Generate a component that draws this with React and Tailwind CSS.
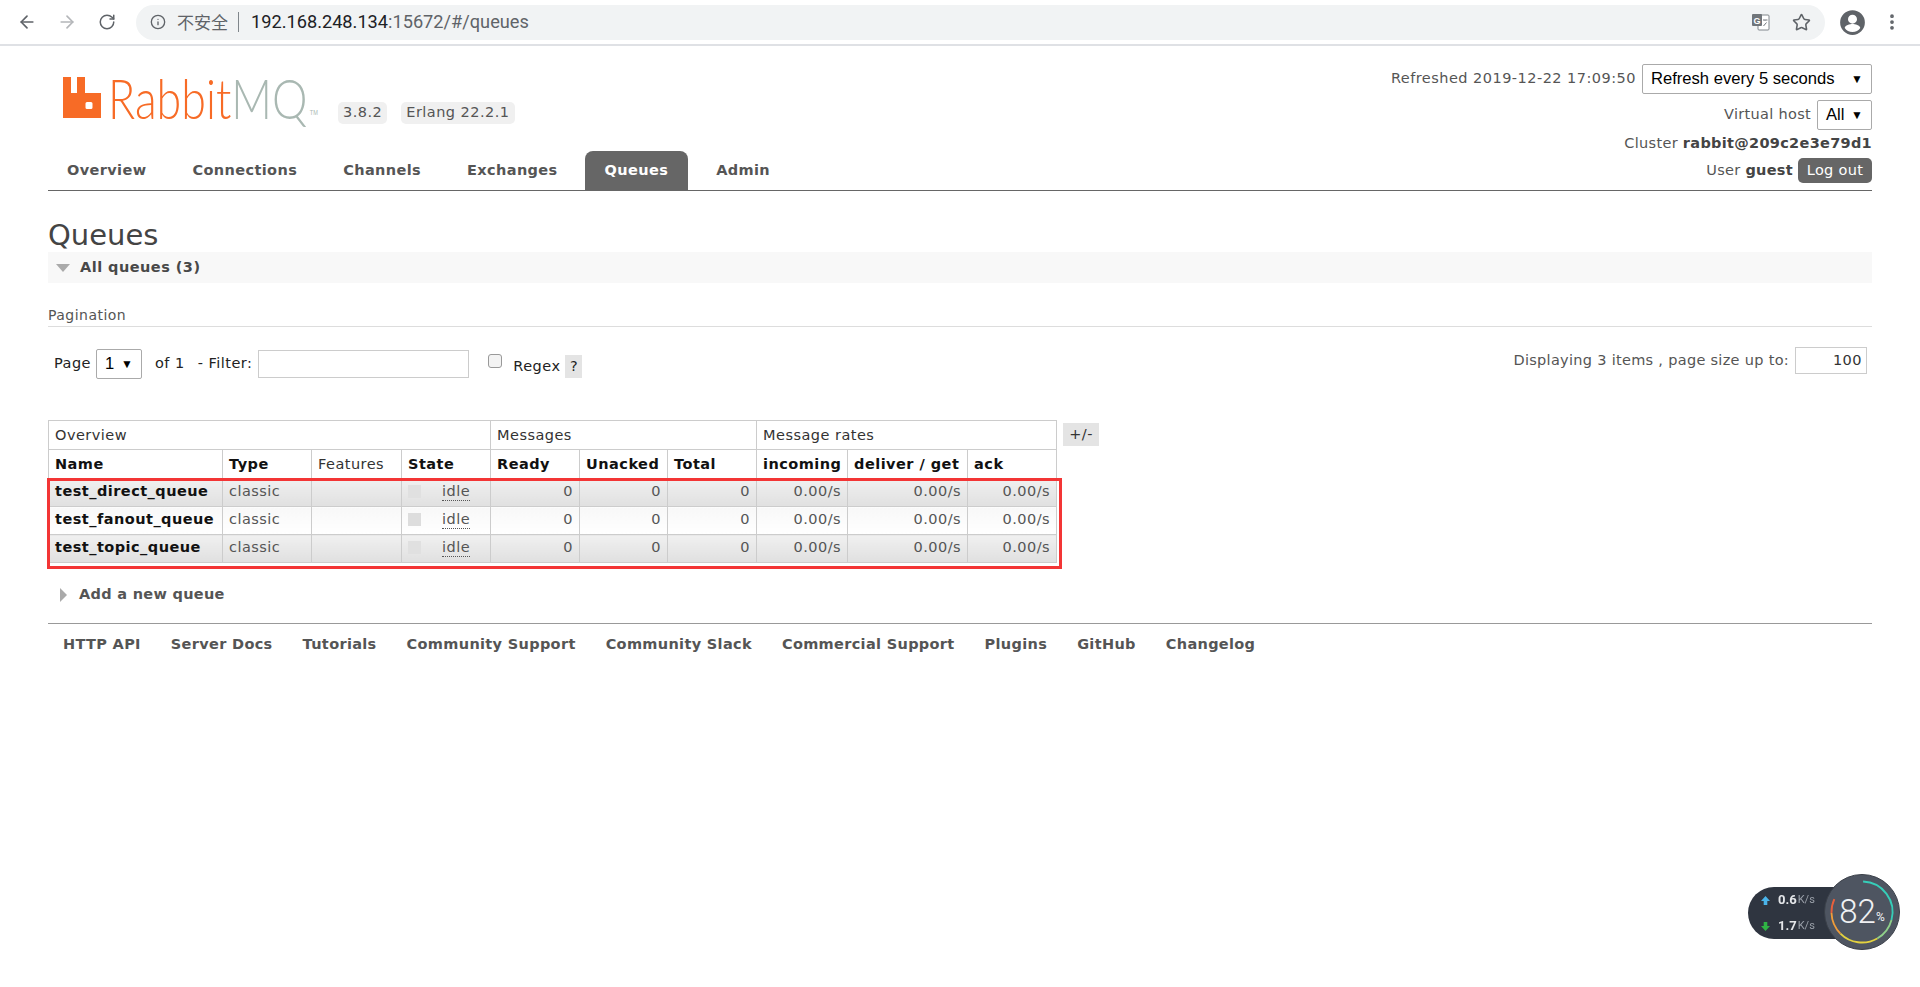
import React from 'react';
import { ArrowLeft, ArrowRight, RotateCw, Info, Star, EllipsisVertical } from 'lucide-react';

const NAV = ['Overview', 'Connections', 'Channels', 'Exchanges', 'Queues', 'Admin'];
const FOOTER = ['HTTP API', 'Server Docs', 'Tutorials', 'Community Support', 'Community Slack', 'Commercial Support', 'Plugins', 'GitHub', 'Changelog'];
const QUEUES = ['test_direct_queue', 'test_fanout_queue', 'test_topic_queue'];
const COLS = [174, 89, 90, 89, 89, 88, 89, 91, 120, 89];

const td = 'border border-[#ccc] px-[6px] pb-[2px] h-[28px] leading-none text-[#555]';
const th = 'border border-[#ccc] px-[6px] pt-[2px] text-left font-bold text-[#111]';
const group = 'border border-[#ccc] px-[6px] pt-[2px] h-[29px] text-left font-normal text-[#333]';

function FakeSelect({ label, className }) {
  return (
    <div className={`flex items-center justify-between border border-[#aaa] rounded-[2px] bg-white pl-[8px] pr-[8px] text-black tracking-normal font-['Liberation_Sans',sans-serif] text-[16.600px] ${className}`}>
      <span>{label}</span>
      <span className="text-[12px]">▼</span>
    </div>
  );
}

function BrowserBar() {
  return (
    <div className="h-[46px] border-b-2 border-[#dfe1e5] flex items-center pl-[17px] pr-[18px] bg-white tracking-normal">
      <ArrowLeft size={20} strokeWidth={2} className="text-[#5f6368]" />
      <ArrowRight size={20} strokeWidth={2} className="text-[#b4b6b9] ml-[20px]" />
      <RotateCw size={18} strokeWidth={2} className="text-[#5f6368] ml-[21px]" />
      <div className="ml-[20px] flex-1 h-[35px] rounded-full bg-[#f1f3f4] flex items-center pl-[14px] pr-[14px] font-['Roboto',sans-serif] text-[18.200px]">
        <Info size={16} strokeWidth={2} className="text-[#5f6368]" />
        <span className="ml-[11px] text-[#5f6368] text-[17px] font-['Noto_Sans_CJK_SC',sans-serif]">不安全</span>
        <span className="ml-[10px] h-[20px] w-px bg-[#80868b]" />
        <span className="ml-[12px] text-[#202124]">192.168.248.134</span>
        <span className="text-[#5f6368]">:15672/#/queues</span>
        <svg viewBox="0 0 20 20" className="ml-auto w-[20px] h-[20px]">
          <rect x="7" y="3" width="11" height="15" rx="1" fill="#fff" stroke="#80868b" />
          <rect x="1" y="2" width="10" height="12" rx="1" fill="#70757a" />
          <text x="6" y="11.5" textAnchor="middle" fontSize="9" fontWeight="700" fill="#fff" fontFamily="Liberation Sans, sans-serif">G</text>
          <path d="M12 8h4.5M14 8v.5M12.5 14l3-3.500" stroke="#70757a" fill="none" />
        </svg>
        <Star size={19} strokeWidth={2} className="text-[#5f6368] ml-[21px]" />
      </div>
      <svg viewBox="0 0 24 24" className="ml-[14px] w-[27px] h-[27px]" fill="#5f6368">
        <path d="M12 1a11 11 0 1 0 0 22 11 11 0 0 0 0-22zm0 4a4 4 0 1 1 0 8 4 4 0 0 1 0-8zm0 15.500c-2.900 0-5.400-1.500-6.900-3.700.1-2.300 4.600-3.500 6.900-3.500s6.800 1.200 6.900 3.500c-1.500 2.200-4 3.700-6.900 3.700z" />
      </svg>
      <EllipsisVertical size={20} strokeWidth={2.500} className="text-[#5f6368] ml-[16px]" />
    </div>
  );
}

function Logo() {
  return (
    <div className="flex items-end w-[255px] tracking-normal">
      <svg viewBox="0 0 38 41" className="w-[38px] h-[41px] shrink-0">
        <path fillRule="evenodd" fill="#f76b26" d="M0 0h8v16h6V0h8v16h16v25H0zM24 25a1.500 1.500 0 0 0-1.500 1.500v4a1.500 1.500 0 0 0 1.500 1.500h4a1.500 1.500 0 0 0 1.500-1.500v-4a1.500 1.500 0 0 0-1.500-1.500z" />
      </svg>
      {/* the wordmark is narrower than any installed face, so squeeze it */}
      <span className="ml-[7px] flex items-end origin-left scale-x-[0.8] whitespace-nowrap">
        <span className="text-[56px] leading-[41px] h-[41px] font-light font-['Lato',sans-serif] text-[#f76b26]">Rabbit</span>
        <span className="text-[56px] leading-[41px] h-[41px] font-light font-['Lato',sans-serif] text-[#a9b8b2]">MQ</span>
        <span className="ml-[3px] text-[7px] text-[#a9b8b2] font-['Liberation_Sans',sans-serif]">TM</span>
      </span>
    </div>
  );
}

function Header() {
  return (
    <div className="relative h-[145px] mx-[48px] border-b border-[#666] flex justify-between items-end">
      <div>
        <div className="flex items-end ml-[15px] mb-[33px]">
          <Logo />
          <span className="ml-[20px] -mb-[6px] h-[22px] px-[5px] rounded-[5px] bg-[#f0f0f0] text-[#555] flex items-center">3.8.2</span>
          <span className="ml-[14px] -mb-[6px] h-[22px] px-[5px] rounded-[5px] bg-[#f0f0f0] text-[#555] flex items-center">Erlang 22.2.1</span>
        </div>
        <nav className="flex font-bold text-[#555] tracking-[0.38px]">
          {NAV.map(n => (
            <span key={n} className={n === 'Queues' ? 'h-[39px] ml-[1px] mr-[8px] px-[20px] rounded-t-[8px] bg-[#666] text-white flex items-center' : 'h-[39px] px-[20px] flex items-center mr-[6px] first:pl-[19px]'}>{n}</span>
          ))}
        </nav>
      </div>
      <div className="flex flex-col items-end text-[#555] mb-[7px]">
        <div className="flex items-center">
          <span>Refreshed 2019-12-22 17:09:50</span>
          <FakeSelect label="Refresh every 5 seconds" className="ml-[6px] w-[230px] h-[30px]" />
        </div>
        <div className="flex items-center mt-[6px] tracking-[0.3px]">
          <span>Virtual host</span>
          <FakeSelect label="All" className="ml-[6px] w-[55px] h-[30px]" />
        </div>
        <div className="mt-[4px] h-[20px] flex items-center tracking-[0.3px]">Cluster&nbsp;<b className="text-[#444]">rabbit@209c2e3e79d1</b></div>
        <div className="mt-[4px] flex items-center tracking-[0.3px]">
          User&nbsp;<b className="text-[#444]">guest</b>
          <span className="ml-[5px] w-[74px] h-[25px] rounded-[5px] bg-[#666] text-white flex items-center justify-center">Log out</span>
        </div>
      </div>
    </div>
  );
}

function QueueTable() {
  return (
    <div className="relative mt-[41px] ml-[48px] w-[1052px] flex items-start">
      <table className="table-fixed border-collapse w-[1009px] text-[14.500px]">
        <colgroup>
          {COLS.map((w, i) => <col key={i} style={{ width: w }} />)}
        </colgroup>
        <thead>
          <tr>
            <th colSpan={4} className={group}>Overview</th>
            <th colSpan={3} className={group}>Messages</th>
            <th colSpan={3} className={group}>Message rates</th>
          </tr>
          <tr className="h-[29px]">
            <th className={th}>Name</th>
            <th className={th}>Type</th>
            <th className={`${th} !font-normal !text-[#333]`}>Features</th>
            <th className={th}>State</th>
            <th className={th}>Ready</th>
            <th className={th}>Unacked</th>
            <th className={th}>Total</th>
            <th className={th}>incoming</th>
            <th className={th}>deliver / get</th>
            <th className={th}>ack</th>
          </tr>
        </thead>
        <tbody>
          {QUEUES.map((name, i) => {
            const bg = i % 2 === 0 ? 'bg-linear-to-b from-[#f0f0f0] to-[#e0e0e0]' : 'bg-linear-to-b from-[#f8f8f8] to-[#ffffff]';
            return (
              <tr key={name}>
                <td className={`${td} ${bg} font-bold !text-[#111] whitespace-nowrap`}>{name}</td>
                <td className={`${td} ${bg}`}>classic</td>
                <td className={`${td} ${bg}`} />
                <td className={`${td} ${bg}`}>
                  <div className="flex items-center">
                    <span className={`w-[13px] h-[13px] ${i % 2 === 0 ? 'bg-[#e0e0e0]' : 'bg-[#ddd]'}`} />
                    <span className="ml-[21px] border-b border-dotted border-[#555] leading-[17px]">idle</span>
                  </div>
                </td>
                {['0', '0', '0', '0.00/s', '0.00/s', '0.00/s'].map((v, j) => (
                  <td key={j} className={`${td} ${bg} text-right`}>{v}</td>
                ))}
              </tr>
            );
          })}
        </tbody>
      </table>
      <span className="ml-[6px] mt-[3px] w-[36px] h-[23px] bg-[#e4e4e4] text-[#333] flex items-center justify-center text-[14.500px]">+/-</span>
      {/* red annotation round the data rows */}
      <div className="absolute left-[-1px] top-[58px] w-[1015px] h-[91px] border-[3px] border-[#f33535] pointer-events-none" />
    </div>
  );
}

function arc(r, from, to) {
  const p = a => {
    const t = (a - 90) * Math.PI / 180;
    return `${40 + r * Math.cos(t)} ${40 + r * Math.sin(t)}`;
  };
  return `M${p(from)}A${r} ${r} 0 ${to - from > 180 ? 1 : 0} 1 ${p(to)}`;
}

function SpeedWidget() {
  return (
    <div className="fixed left-[1748px] top-[872px] w-[150px] h-[80px] tracking-normal font-['Roboto',sans-serif]">
      <div className="absolute left-0 top-[15px] w-[110px] h-[52px] rounded-l-[26px] bg-[#2f3540] text-white">
        <div className="flex items-center pl-[13px] h-[26px] text-[13px] font-bold text-[#e4e6e9]">
          <svg viewBox="0 0 10 10" className="w-[9px] h-[9px] mr-[8px]"><path d="M5 0l5 5.500H7V10H3V5.500H0z" fill="#4ab4ea" /></svg>
          0.6<span className="ml-[1px] text-[11px] font-normal text-[#9aa0a9]">K/s</span>
        </div>
        <div className="flex items-center pl-[13px] h-[26px] text-[13px] font-bold text-[#e4e6e9]">
          <svg viewBox="0 0 10 10" className="w-[9px] h-[9px] mr-[8px]"><path d="M5 10L0 4.500h3V0h4v4.500h3z" fill="#2fb344" /></svg>
          1.7<span className="ml-[1px] text-[11px] font-normal text-[#9aa0a9]">K/s</span>
        </div>
      </div>
      <div className="absolute left-[76px] top-[2px] w-[76px] h-[76px] rounded-full bg-[#4e5561] border border-[#3b4049] flex items-center justify-center text-[#f0f1f3] text-[33px] font-light">
        <svg viewBox="0 0 80 80" className="absolute inset-0 w-full h-full" fill="none" strokeWidth="2">
          <path d={arc(33, 2, 105)} stroke="#36cdb8" />
          <path d={arc(33, 105, 150)} stroke="#8fd08a" />
          <path d={arc(33, 150, 225)} stroke="#e3d23f" />
          <path d={arc(33, 225, 268)} stroke="#ef9c3a" />
          <path d={arc(33, 268, 295)} stroke="#e8603c" />
        </svg>
        <span>82</span><span className="text-[12px] mt-[10px] font-normal">%</span>
      </div>
    </div>
  );
}

export default function App() {
  return (
    <div className="min-h-screen bg-white font-['DejaVu_Sans',sans-serif] text-[14.500px] tracking-[0.47px] text-[#444]">
      <BrowserBar />
      <Header />

      <h1 className="mx-[48px] mt-[27px] h-[34px] text-[29px] leading-[34px] font-normal tracking-normal text-[#444]">Queues</h1>
      <div className="mx-[48px] h-[31px] bg-[#f8f8f8] flex items-center pl-[8px] font-bold text-[#484848]">
        <span className="w-0 h-0 border-x-[7px] border-x-transparent border-t-[8px] border-t-[#aaa]" />
        <span className="ml-[10px]">All queues (3)</span>
      </div>

      <div className="mx-[48px] mt-[22px] h-[22px] border-b border-[#ddd] text-[#555] text-[14px] leading-[20px]">Pagination</div>

      <div className="mx-[48px] mt-[22px] h-[30px] flex items-center pl-[6px] pr-[5px] text-[#222]">
        <span>Page</span>
        <FakeSelect label="1" className="ml-[5px] w-[46px] h-[30px]" />
        <span className="ml-[13px]">of 1</span>
        <span className="ml-[13px]">- Filter:</span>
        <span className="ml-[6px] w-[211px] h-[28px] border border-[#ccc]" />
        <span className="ml-[19px] w-[14px] h-[14px] rounded-[3px] border border-[#999] bg-[#f3f3f3] mb-[6px]" />
        <span className="ml-[11px] mt-[5px]">Regex</span>
        <span className="ml-[5px] mt-[5px] w-[17px] h-[23px] bg-[#e4e4e4] flex items-center justify-center">?</span>
        <span className="ml-auto mb-[7px] tracking-[0.3px] text-[#555]">Displaying 3 items , page size up to:</span>
        <span className="ml-[6px] mb-[7px] w-[72px] h-[27px] border border-[#ccc] text-right pr-[4px] leading-[25px] text-[#333]">100</span>
      </div>

      <QueueTable />

      <div className="ml-[48px] mt-[22px] h-[20px] flex items-center pl-[12px] font-bold text-[#555]">
        <span className="w-0 h-0 border-y-[7px] border-y-transparent border-l-[7px] border-l-[#aaa]" />
        <span className="ml-[12px] tracking-[0.3px]">Add a new queue</span>
      </div>

      <footer className="mx-[48px] mt-[18px] border-t border-[#999] pt-[10px] pl-[15px] flex gap-[30px] font-bold tracking-[0.33px] text-[#555]">
        {FOOTER.map(f => <span key={f}>{f}</span>)}
      </footer>

      <SpeedWidget />
    </div>
  );
}
